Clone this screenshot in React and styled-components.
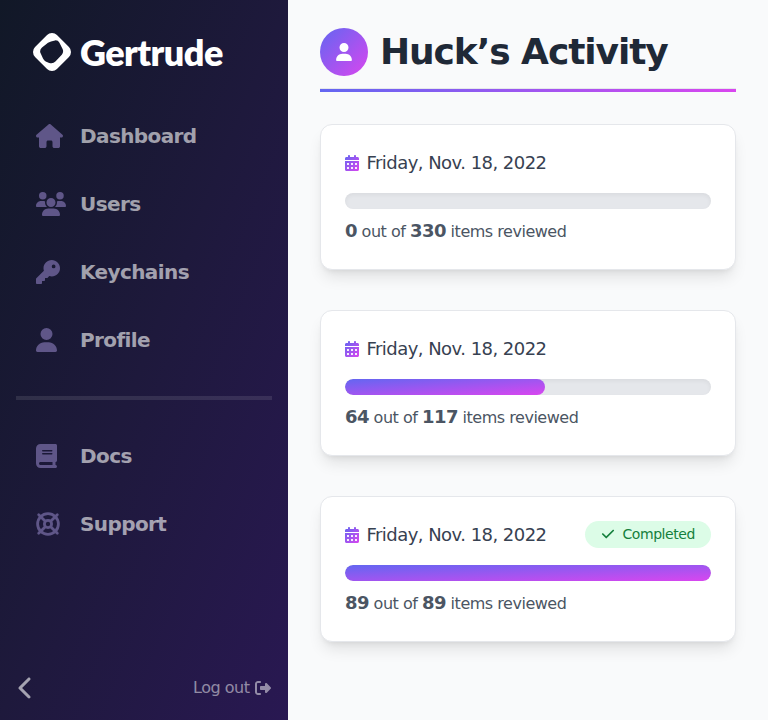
import React from "react";
import styled, { createGlobalStyle } from "styled-components";
import {
  FaHouse,
  FaUsers,
  FaKey,
  FaUser,
  FaBook,
  FaChevronLeft,
  FaRightFromBracket,
  FaCheck,
  FaCalendarDays,
} from "react-icons/fa6";

const GlobalStyle = createGlobalStyle`
  *, *::before, *::after { box-sizing: border-box; }
  body {
    margin: 0;
    font-family: "DejaVu Sans", sans-serif;
    line-height: 1.5;
    background: #f9fafb;
  }
  h1, h2, p { margin: 0; font-weight: inherit; font-size: inherit; }
  svg { display: block; }
`;

const Shell = styled.div`
  display: flex;
  height: 100vh;
  overflow: hidden;
`;

const Sidebar = styled.aside`
  display: flex;
  flex-direction: column;
  flex: none;
  width: 288px;
  background: linear-gradient(to bottom right, #111827, #1e193c 50%, #291852);
`;

const Brand = styled.div`
  display: flex;
  align-items: center;
  height: 108px;
  padding: 0 0 4px 33px;
  color: #fff;
`;

const BrandName = styled.span`
  margin-left: 9px;
  font-family: Lato, sans-serif;
  font-weight: 800;
  font-size: 36px;
  line-height: 40px;
  letter-spacing: -0.54px;
`;

const NavGroup = styled.nav`
  display: flex;
  flex-direction: column;
  gap: 12px;
  padding: 0 16px;
`;

const NavItem = styled.a`
  display: flex;
  align-items: center;
  height: 56px;
  padding-left: 20px;
  color: rgba(255, 255, 255, 0.6);
  font-weight: 700;
  font-size: 20px;
  line-height: 28px;
  letter-spacing: -0.6px;
`;

const NavIcon = styled.span`
  width: 44px;
  color: #5f5688;
  svg { width: ${(p) => p.$width}px; height: 24px; }
`;

const Divider = styled.div`
  height: 4px;
  margin: 28px 16px;
  background: rgba(255, 255, 255, 0.1);
`;

const SidebarFooter = styled.div`
  display: flex;
  align-items: center;
  justify-content: space-between;
  height: 64px;
  margin-top: auto;
  padding: 0 17px 0 14px;
`;

const Collapse = styled.div`
  color: rgba(255, 255, 255, 0.6);
  font-size: 24px;
`;

const LogOut = styled.div`
  display: flex;
  align-items: center;
  gap: 5.500px;
  color: rgba(255, 255, 255, 0.5);
  font-size: 16px;
  letter-spacing: -0.48px;
`;

const Main = styled.main`
  flex: 1;
  padding: 28px 32px;
  background: #f9fafb;
`;

const Header = styled.header`
  display: flex;
  align-items: center;
  height: 61px;
  padding-bottom: 12px;
  border-bottom: 1px solid #e5e7eb;
`;

const Avatar = styled.div`
  display: flex;
  align-items: center;
  justify-content: center;
  width: 48px;
  height: 48px;
  border-radius: 50%;
  background: linear-gradient(to bottom right, #6366f1, #d946ef);
  color: #fff;
  font-size: 18px;
`;

const Title = styled.h1`
  margin-left: 12px;
  color: #1f2937;
  font-weight: 700;
  font-size: 36px;
  line-height: 40px;
  letter-spacing: -1.08px;
`;

const HeaderRule = styled.div`
  height: 3px;
  background: linear-gradient(to right, #6366f1, #d946ef);
`;

const DayList = styled.div`
  display: flex;
  flex-direction: column;
  gap: 40px;
  margin-top: 32px;
`;

const Card = styled.article`
  height: 146px;
  padding: 24px;
  border: 1px solid #e5e7eb;
  border-radius: 12px;
  background: #fff;
  box-shadow: 0 10px 15px -3px rgba(0, 0, 0, 0.1), 0 4px 6px -4px rgba(0, 0, 0, 0.1);
`;

const CardTop = styled.div`
  display: flex;
  align-items: center;
  justify-content: space-between;
  height: 28px;
`;

const DateLabel = styled.h2`
  display: flex;
  align-items: center;
  gap: 7.5px;
  color: #374151;
  font-size: 18px;
  line-height: 28px;
  letter-spacing: -0.54px;
`;

const CalendarIcon = styled(FaCalendarDays)`
  width: 14px;
  height: 16px;
  path { fill: url(#accent); }
`;

const Badge = styled.span`
  display: flex;
  align-items: center;
  gap: 7.500px;
  height: 27px;
  margin-top: -2px;
  padding: 0 16px;
  border-radius: 14px;
  background: #dcfce7;
  color: #15803d;
  font-size: 14px;
  letter-spacing: -0.42px;
`;

const Track = styled.div`
  height: 16px;
  margin-top: 16px;
  border-radius: 8px;
  background: #e5e7eb;
  box-shadow: inset 0 2px 4px rgba(0, 0, 0, 0.05);
  overflow: hidden;
`;

const Fill = styled.div`
  height: 16px;
  border-radius: 8px;
  background: linear-gradient(to bottom right, #6366f1, #d946ef);
`;

const Summary = styled.p`
  margin-top: 8px;
  color: #4b5563;
  font-size: 16px;
  line-height: 28px;
  letter-spacing: -0.48px;
  strong { font-size: 18px; letter-spacing: -0.54px; }
`;

const HiddenDefs = styled.svg`
  position: absolute;
  width: 0;
  height: 0;
`;

const Logo = () => (
  <svg width="38" height="38" viewBox="0 0 38 38">
    <path
      fill="currentColor"
      fillRule="evenodd"
      d="M14.05 2.05A7 7 0 0 1 23.95 2.05L35.95 14.05A7 7 0 0 1 35.95 23.95L23.95 35.95A7 7 0 0 1 14.05 35.95L2.05 23.95A7 7 0 0 1 2.05 14.05ZM9 14.6L15 9.8Q17.500 8 22 7.400Q25 7.100 26.300 9.400L29.600 16Q31 19 28.800 21.800L22.400 28.600Q20 31 16.200 29.900L12.700 28.400Q11 27.600 10 25.600L7.500 20Q6.300 17 9 14.600Z"
    />
  </svg>
);

const LifeRing = () => (
  <svg viewBox="0 0 24 24" fill="none" stroke="currentColor" strokeWidth="2.8">
    <circle cx="12" cy="12" r="10.4" />
    <circle cx="12" cy="12" r="3.6" />
    <path
      strokeLinecap="round"
      d="M2.700 2.700L9.300 9.300M21.300 2.700L14.700 9.300M2.700 21.300L9.300 14.700M21.300 21.300L14.700 14.700"
    />
  </svg>
);

const primaryNav = [
  ["Dashboard", FaHouse, 27],
  ["Users", FaUsers, 30],
  ["Keychains", FaKey, 24],
  ["Profile", FaUser, 21],
];
const secondaryNav = [
  ["Docs", FaBook, 21],
  ["Support", LifeRing, 24],
];
const days = [
  { reviewed: 0, total: 330 },
  { reviewed: 64, total: 117 },
  { reviewed: 89, total: 89 },
];

const Nav = ({ items }) => (
  <NavGroup>
    {items.map(([label, Icon, width]) => (
      <NavItem key={label}>
        <NavIcon $width={width}><Icon /></NavIcon>
        {label}
      </NavItem>
    ))}
  </NavGroup>
);

const Day = ({ reviewed, total }) => (
  <Card>
    <CardTop>
      <DateLabel><CalendarIcon />Friday, Nov. 18, 2022</DateLabel>
      {reviewed === total && <Badge><FaCheck />Completed</Badge>}
    </CardTop>
    <Track><Fill style={{ width: `${(reviewed / total) * 100}%` }} /></Track>
    <Summary>
      <strong>{reviewed}</strong> out of <strong>{total}</strong> items reviewed
    </Summary>
  </Card>
);

export default function App() {
  return (
    <Shell>
      <GlobalStyle />
      <HiddenDefs aria-hidden="true">
        <linearGradient id="accent" x1="0" y1="0" x2="1" y2="1">
          <stop offset="0" stopColor="#6366f1" />
          <stop offset="1" stopColor="#d946ef" />
        </linearGradient>
      </HiddenDefs>
      <Sidebar>
        <Brand><Logo /><BrandName>Gertrude</BrandName></Brand>
        <Nav items={primaryNav} />
        <Divider />
        <Nav items={secondaryNav} />
        <SidebarFooter>
          <Collapse><FaChevronLeft /></Collapse>
          <LogOut>Log out<FaRightFromBracket /></LogOut>
        </SidebarFooter>
      </Sidebar>
      <Main>
        <Header><Avatar><FaUser /></Avatar><Title>Huck’s Activity</Title></Header>
        <HeaderRule />
        <DayList>
          {days.map((day) => <Day key={day.total} {...day} />)}
        </DayList>
      </Main>
    </Shell>
  );
}
